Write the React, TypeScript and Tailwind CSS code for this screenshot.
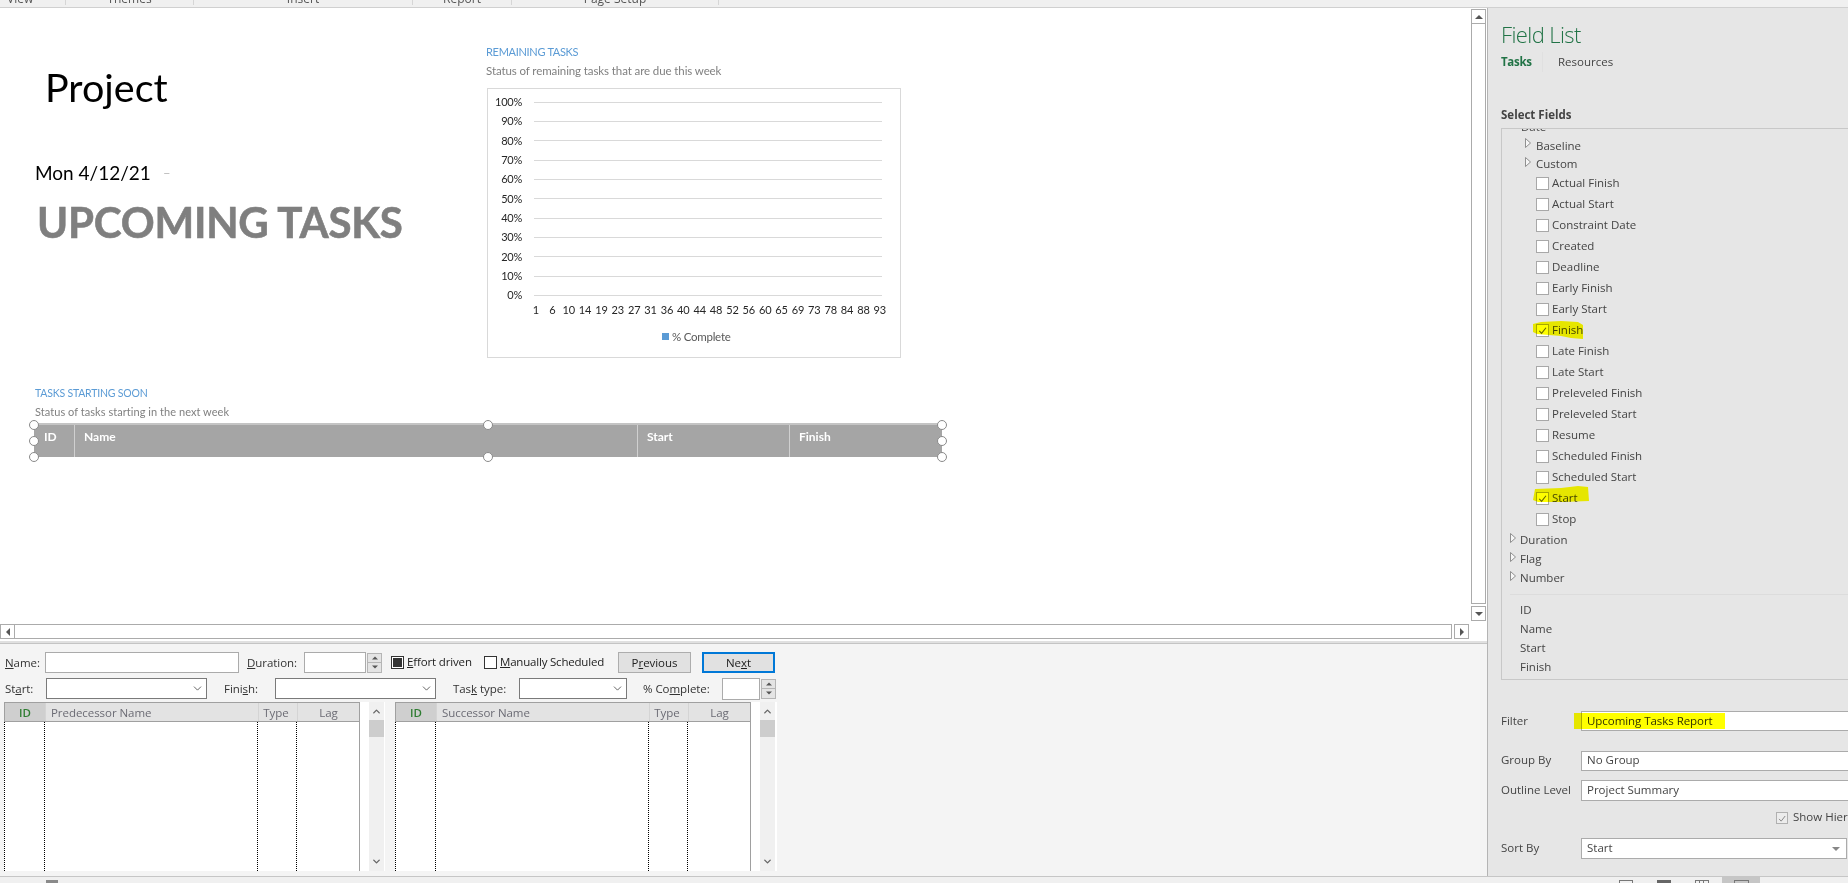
import React from "react";
import { ChevronDown, ChevronUp } from "lucide-react";

const Tri = ({ dir, className = "" }: { dir: "up" | "down" | "left" | "right"; className?: string }) => {
  const pts = { up: "0,5 4,1 8,5", down: "0,1 4,5 8,1", left: "5,0 1,4 5,8", right: "1,0 5,4 1,8" }[dir];
  const box = dir === "up" || dir === "down" ? "0 0 8 6" : "0 0 6 8";
  const cls = dir === "up" || dir === "down" ? "w-[8px] h-[6px]" : "w-[6px] h-[8px]";
  return (
    <svg viewBox={box} className={`${cls} ${className}`}>
      <polygon points={pts} fill="#555" />
    </svg>
  );
};

const Expander = () => (
  <svg viewBox="0 0 6 10" className="w-[6px] h-[10px] shrink-0 -mt-[5px]">
    <polygon points="0.5,0.5 5.5,5 0.5,9.5" fill="#f6f6f6" stroke="#858585" strokeWidth="0.9" />
  </svg>
);

const Check = ({ color = "#666" }: { color?: string }) => (
  <svg viewBox="0 0 12 12" className="w-[11px] h-[11px]">
    <path d="M2.5 6.5 L5 9.2 L9.8 3" fill="none" stroke={color} strokeWidth="1.2" />
  </svg>
);

const Box = ({ checked, children }: { checked?: boolean; children?: React.ReactNode }) => (
  <span className="w-[13px] h-[13px] border border-[#a8a8a8] bg-white flex items-center justify-center shrink-0">
    {checked && <Check />}
    {children}
  </span>
);

const FieldRow = ({ label, checked }: { label: string; checked?: boolean }) => (
  <div className="h-[21px] flex items-center pl-[34px] gap-[3px]">
    <Box checked={checked} />
    <span className="mb-[2px]">{label}</span>
  </div>
);

const Highlight = ({ w, h, d, className }: { w: number; h: number; d: string; className: string }) => (
  <svg viewBox={`0 0 ${w} ${h}`} width={w} height={h} className={`absolute mix-blend-multiply ${className}`}>
    <path d={d} fill="#ffff00" />
  </svg>
);

const Spinner = ({ className = "" }: { className?: string }) => (
  <div className={`w-[15px] h-[20px] flex flex-col shrink-0 ${className}`}>
    <div className="h-[10px] bg-[#e4e4e4] border border-[#b5b5b5] flex items-center justify-center">
      <Tri dir="up" className="scale-75" />
    </div>
    <div className="h-[10px] bg-[#e4e4e4] border border-t-0 border-[#b5b5b5] flex items-center justify-center">
      <Tri dir="down" className="scale-75" />
    </div>
  </div>
);

const Select = ({ w }: { w: string }) => (
  <div className={`${w} h-[21px] bg-white border border-[#7a7a7a] flex items-center justify-end pr-[2px] shrink-0`}>
    <ChevronDown size={13} strokeWidth={1.5} color="#444" />
  </div>
);

const Table = ({ name, w }: { name: string; w: string }) => (
  <div className={`${w} h-[169px] bg-white flex`}>
    <div className="w-[356px] border-r border-t border-[#a0a0a0] flex flex-col">
      <div className="h-[19px] shrink-0 flex bg-[#e3e3e3] border-b border-l border-[#a0a0a0] text-[#6b6b74] leading-[19px]">
        <div className="w-[40px] bg-[#cfcfcf] text-center text-[#2f7d32] font-semibold">ID</div>
        <div className="w-[213px] border-l border-[#d4d4d4] pl-[5px]">{name}</div>
        <div className="w-[39px] border-l border-[#d4d4d4] text-center pr-[4px]">Type</div>
        <div className="flex-1 border-l border-[#d4d4d4] text-center">Lag</div>
      </div>
      <div className="flex-1 flex border-l border-dotted border-black">
        <div className="w-[40px] border-r border-dotted border-black" />
        <div className="w-[213px] border-r border-dotted border-black" />
        <div className="w-[39px] border-r border-dotted border-black" />
      </div>
    </div>
    <div className="w-[9px]" />
    <div className="w-[15px] bg-[#f0f0f0] flex flex-col items-center pb-[1px]">
      <div className="h-[18px] flex items-center">
        <ChevronUp size={11} strokeWidth={3} color="#666" />
      </div>
      <div className="w-full h-[17px] bg-[#cdcdcd]" />
      <div className="flex-1" />
      <div className="h-[18px] flex items-center">
        <ChevronDown size={11} strokeWidth={3} color="#666" />
      </div>
    </div>
  </div>
);

const Handle = ({ className }: { className: string }) => (
  <span className={`absolute w-[10px] h-[10px] rounded-full bg-white border-[1.5px] border-[#8a8a8a] ${className}`} />
);

const PCT = ["100%", "90%", "80%", "70%", "60%", "50%", "40%", "30%", "20%", "10%", "0%"];
const XS = ["1","6","10","14","19","23","27","31","36","40","44","48","52","56","60","65","69","73","78","84","88","93"];
const FIELDS: [string, boolean?][] = [
  ["Actual Finish"], ["Actual Start"], ["Constraint Date"], ["Created"], ["Deadline"], ["Early Finish"], ["Early Start"],
  ["Finish", true], ["Late Finish"], ["Late Start"], ["Preleveled Finish"], ["Preleveled Start"], ["Resume"],
  ["Scheduled Finish"], ["Scheduled Start"], ["Start", true], ["Stop"],
];

export default function App() {
  return (
    <div className="w-[1848px] h-[883px] overflow-hidden flex flex-col bg-[#f4f4f4] text-[11.5px] text-[#333] [font-family:'Open_Sans',sans-serif]">
      {/* ribbon remnant */}
      <div className="h-[8px] shrink-0 bg-[#f0f0f0] border-b border-[#d0d0d0] flex overflow-hidden text-[#555] text-[12px] leading-[12px]">
        <div className="w-[66px] h-[5px] border-r border-[#d6d6d6] pl-[7px]"><div className="-mt-[7px]">View</div></div>
        <div className="w-[128px] h-[5px] border-r border-[#d6d6d6] text-center"><div className="-mt-[7px]">Themes</div></div>
        <div className="w-[219px] h-[5px] border-r border-[#d6d6d6] text-center"><div className="-mt-[7px]">Insert</div></div>
        <div className="w-[99px] h-[5px] border-r border-[#d6d6d6] text-center"><div className="-mt-[7px]">Report</div></div>
        <div className="w-[207px] h-[5px] border-r border-[#d6d6d6] text-center"><div className="-mt-[7px]">Page Setup</div></div>
      </div>

      <div className="h-[868px] shrink-0 flex">
        {/* left column */}
        <div className="w-[1488px] shrink-0 flex flex-col border-r border-[#b4b4b4]">
          <div className="h-[616px] shrink-0 flex bg-white">
            {/* report canvas */}
            <div className="w-[1471px] shrink-0 [font-family:Lato,sans-serif]">
              <div className="flex h-[350px]">
                <div className="w-[487px] shrink-0">
                  <div className="mt-[54px] ml-[45px] h-[50px] leading-[50px] text-[39.5px] text-black">Project</div>
                  <div className="mt-[48px] ml-[35px] h-[26px] leading-[26px] text-[19px] text-black flex">
                    <span>Mon 4/12/21</span>
                    <span className="ml-[12px] text-[#bbb] text-[13px]">–</span>
                  </div>
                  <div className="mt-[11px] ml-[37px] h-[50px] leading-[50px] text-[42px] font-bold text-[#7f7f7f] tracking-[-0.2px] [-webkit-text-stroke:0.6px_#7f7f7f]">UPCOMING TASKS</div>
                </div>
                <div className="w-[414px] shrink-0">
                  <div className="mt-[36px] -ml-[1px] h-[16px] leading-[16px] text-[11px] text-[#5b9bd5] tracking-[-0.3px]">REMAINING TASKS</div>
                  <div className="mt-[3px] -ml-[1px] h-[16px] leading-[16px] text-[11.5px] text-[#808080] tracking-[-0.1px]">Status of remaining tasks that are due this week</div>
                  <div className="mt-[9px] h-[270px] border border-[#d9d9d9] text-[11px] text-[#262626] tracking-[-0.25px] pt-[3.5px]">
                    {PCT.map((p) => (
                      <div key={p} className="h-[19.33px] flex items-center pr-[18px]">
                        <span className="w-[34px] text-right shrink-0">{p}</span>
                        <span className="ml-[12px] flex-1 border-t border-[#d9d9d9]" />
                      </div>
                    ))}
                    <div className="-mt-[2.5px] h-[14px] leading-[14px] flex pl-[39.8px] tracking-[-0.1px]">
                      {XS.map((x) => (
                        <span key={x} className="w-[16.38px] shrink-0 text-center">{x}</span>
                      ))}
                    </div>
                    <div className="mt-[13px] h-[14px] flex items-center pl-[174px] text-[#595959] text-[11.5px]">
                      <span className="w-[7px] h-[7px] bg-[#5b9bd5] mr-[3px]" />
                      <span>% Complete</span>
                    </div>
                  </div>
                </div>
              </div>
              <div className="ml-[35px] mt-[27px] h-[16px] leading-[16px] text-[10.5px] text-[#5b9bd5] tracking-[-0.2px]">TASKS STARTING SOON</div>
              <div className="ml-[35px] mt-[3px] h-[16px] leading-[16px] text-[11px] text-[#808080] tracking-[0.05px]">Status of tasks starting in the next week</div>
              <div className="relative ml-[34px] mt-[3px] w-[908px] h-[34px] bg-[#a5a5a5] border-t-[2px] border-[#c4c4c4] flex text-white font-bold text-[12px] leading-[24px]">
                <div className="w-[41px] pl-[10px] border-r border-[#d0d0d0]">ID</div>
                <div className="w-[563px] pl-[9px] border-r border-[#d0d0d0]">Name</div>
                <div className="w-[152px] pl-[9px] border-r border-[#d0d0d0]">Start</div>
                <div className="flex-1 pl-[9px]">Finish</div>
                <Handle className="-left-[5px] -top-[5px]" />
                <Handle className="-left-[5px] top-[11px]" />
                <Handle className="-left-[5px] top-[27px]" />
                <Handle className="left-[449px] -top-[5px]" />
                <Handle className="left-[449px] top-[27px]" />
                <Handle className="-right-[5px] -top-[5px]" />
                <Handle className="-right-[5px] top-[11px]" />
                <Handle className="-right-[5px] top-[27px]" />
              </div>
            </div>
            {/* vertical scrollbar */}
            <div className="w-[15px] shrink-0 flex flex-col pt-[1px] pb-[3px]">
              <div className="h-[15px] border border-[#ababab] flex items-center justify-center"><Tri dir="up" /></div>
              <div className="flex-1 border-x border-b border-[#ababab]" />
              <div className="mt-[2px] h-[15px] border border-[#ababab] flex items-center justify-center"><Tri dir="down" /></div>
            </div>
          </div>
          {/* horizontal scrollbar */}
          <div className="h-[17px] shrink-0 bg-white flex items-start">
            <div className="w-[15px] h-[15px] border border-[#ababab] flex items-center justify-center"><Tri dir="left" /></div>
            <div className="w-[1437px] h-[15px] border-y border-r border-[#ababab]" />
            <div className="ml-[2px] w-[15px] h-[15px] border border-[#ababab] flex items-center justify-center"><Tri dir="right" /></div>
          </div>
          <div className="h-[3px] shrink-0 bg-[#e0e0e0] border-b border-[#c4c4c4]" />
          {/* task form */}
          <div className="flex-1 flex flex-col pt-[8px] text-[#333] tracking-[-0.05px]">
            <div className="flex items-center h-[21px] pl-[5px]">
              <span className="w-[40px] shrink-0"><u>N</u>ame:</span>
              <div className="w-[194px] h-[21px] bg-white border border-[#ababab] shrink-0" />
              <span className="ml-[8px] w-[57px] shrink-0"><u>D</u>uration:</span>
              <div className="w-[62px] h-[21px] bg-white border border-[#ababab] shrink-0" />
              <Spinner className="ml-[1px]" />
              <span className="ml-[9px] w-[13px] h-[13px] border border-[#333] bg-white flex items-center justify-center shrink-0">
                <span className="w-[9px] h-[9px] bg-[#333]" />
              </span>
              <span className="ml-[3px] w-[77px] shrink-0 text-[#222] tracking-[-0.15px] mb-[2px]"><u>E</u>ffort driven</span>
              <span className="w-[13px] h-[13px] border border-[#333] bg-white shrink-0" />
              <span className="ml-[3px] w-[118px] shrink-0 text-[#222] tracking-[-0.2px] mb-[2px]"><u>M</u>anually Scheduled</span>
              <div className="w-[73px] h-[21px] bg-[#e1e1e1] border border-[#adadad] text-center leading-[20px] text-[#222] shrink-0">P<u>r</u>evious</div>
              <div className="ml-[11px] w-[73px] h-[21px] bg-[#e1e1e1] border-2 border-[#0078d7] text-center leading-[18px] text-[#222] shrink-0">Ne<u>x</u>t</div>
            </div>
            <div className="flex items-center h-[21px] mt-[5px] pl-[5px]">
              <span className="w-[41px] shrink-0">St<u>a</u>rt:</span>
              <Select w="w-[161px]" />
              <span className="ml-[17px] w-[51px] shrink-0">Fini<u>s</u>h:</span>
              <Select w="w-[161px]" />
              <span className="ml-[17px] w-[66px] shrink-0">Tas<u>k</u> type:</span>
              <Select w="w-[108px]" />
              <span className="ml-[16px] w-[79px] shrink-0">% Co<u>m</u>plete:</span>
              <div className="w-[38px] h-[22px] bg-white border border-[#ababab] shrink-0" />
              <Spinner className="ml-[1px]" />
            </div>
            <div className="flex mt-[3px] pl-[4px] gap-[10px]">
              <Table name="Predecessor Name" w="w-[381px]" />
              <Table name="Successor Name" w="w-[382px]" />
            </div>
          </div>
        </div>

        {/* field list */}
        <div className="w-[360px] shrink-0 bg-[#e6e6e6] flex flex-col pl-[13px] text-[#444] text-[11.5px] overflow-hidden">
          <div className="mt-[10px] h-[32px] leading-[32px] text-[22px] font-light text-[#217346] tracking-[-0.6px]">Field List</div>
          <div className="mt-[2px] h-[20px] flex items-center">
            <span className="w-[42px] font-bold text-[#217346] border-r border-[#e0e0e0] leading-[20px] tracking-[-0.3px]">Tasks</span>
            <span className="ml-[15px]">Resources</span>
          </div>
          <div className="mt-[34px] h-[18px] leading-[18px] font-bold">Select Fields</div>
          <div className="mt-[4px] h-[552px] w-[360px] shrink-0 border border-[#c8c8c8] overflow-hidden">
            <div className="-mt-[11px] h-[18px] leading-[18px] pl-[19px]">Date</div>
            <div className="h-[19px] flex items-center pl-[23px] gap-[5px]"><Expander /><span>Baseline</span></div>
            <div className="h-[18px] flex items-center pl-[23px] gap-[5px]"><Expander /><span>Custom</span></div>
            <div className="relative">
              {FIELDS.map(([l, c]) => (
                <FieldRow key={l} label={l} checked={c} />
              ))}
              <Highlight w={50} h={18} className="left-[31px] top-[148px]" d="M0 3 L8 1 L28 0 L45 1 L50 4 L50 18 L38 17 L28 15 L4 13 L0 11 Z" />
              <Highlight w={56} h={17} className="left-[31px] top-[313px]" d="M2 3 L28 2 L45 0 L55 1 L56 15 L30 16 L5 16 L0 14 Z" />
            </div>
            <div className="mt-[1px] h-[19px] flex items-center pl-[8px] gap-[4px]"><Expander /><span className="mb-[2px]">Duration</span></div>
            <div className="h-[19px] flex items-center pl-[8px] gap-[4px]"><Expander /><span className="mb-[2px]">Flag</span></div>
            <div className="h-[19px] flex items-center pl-[8px] gap-[4px]"><Expander /><span className="mb-[2px]">Number</span></div>
            <div className="mt-[6px] ml-[8px] border-t border-[#dcdcdc]" />
            <div className="mt-[5px] pl-[18px] leading-[19px]">
              <div>ID</div>
              <div>Name</div>
              <div>Start</div>
              <div>Finish</div>
            </div>
          </div>
          <div className="mt-[31px] flex items-center h-[20px] relative">
            <span className="w-[80px] shrink-0">Filter</span>
            <div className="w-[280px] h-[20px] bg-white border border-r-0 border-[#ababab] shrink-0 pl-[5px] leading-[18px] text-[#333] tracking-[-0.05px]">Upcoming Tasks Report</div>
            <span className="absolute left-[73px] top-[2px] w-[151px] h-[16px] bg-[#ffff00] mix-blend-multiply" />
          </div>
          <div className="mt-[20px] flex items-center h-[20px]">
            <span className="w-[80px] shrink-0 mb-[2px]">Group By</span>
            <div className="w-[280px] h-[20px] bg-white border border-r-0 border-[#ababab] shrink-0 pl-[5px] leading-[16px]">No Group</div>
          </div>
          <div className="mt-[9px] flex items-center h-[21px]">
            <span className="w-[80px] shrink-0 whitespace-nowrap mb-[2px]">Outline Level</span>
            <div className="w-[280px] h-[21px] bg-white border border-r-0 border-[#ababab] shrink-0 pl-[5px] leading-[17px]">Project Summary</div>
          </div>
          <div className="mt-[11px] h-[12px] flex items-center pl-[275px] gap-[5px] whitespace-nowrap">
            <span className="w-[12px] h-[12px] border border-[#b0b0b0] bg-[#ececec] flex items-center justify-center shrink-0"><Check color="#8a8a8a" /></span>
            <span className="mb-[2px]">Show Hierarchy</span>
          </div>
          <div className="mt-[14px] flex items-center h-[21px]">
            <span className="w-[80px] shrink-0 mb-[2px]">Sort By</span>
            <div className="w-[266px] h-[21px] bg-white border border-[#ababab] shrink-0 pl-[5px] pr-[6px] flex items-center justify-between">
              <span className="mb-[2px]">Start</span>
              <Tri dir="down" className="opacity-70" />
            </div>
          </div>
        </div>
      </div>

      {/* status bar */}
      <div className="flex-1 bg-[#f0f0f0] border-t border-[#c6c6c6] flex overflow-hidden">
        <span className="ml-[46px] mt-[3px] w-[12px] h-[6px] bg-[#8a8a8a] shrink-0" />
        <span className="ml-[1561px] mt-[3px] w-[14px] h-[8px] border border-[#777] shrink-0" />
        <span className="ml-[24px] mt-[3px] w-[14px] h-[8px] bg-[#666] shrink-0" />
        <span className="ml-[24px] mt-[3px] w-[14px] h-[8px] border border-[#777] shrink-0 flex">
          <span className="w-[4px] border-r border-[#777]" />
          <span className="w-[4px] border-r border-[#777]" />
        </span>
        <span className="ml-[13px] w-[38px] bg-[#c6c6c6] shrink-0 flex justify-center pt-[3px]">
          <span className="w-[15px] h-[8px] border border-[#777]" />
        </span>
      </div>
    </div>
  );
}
